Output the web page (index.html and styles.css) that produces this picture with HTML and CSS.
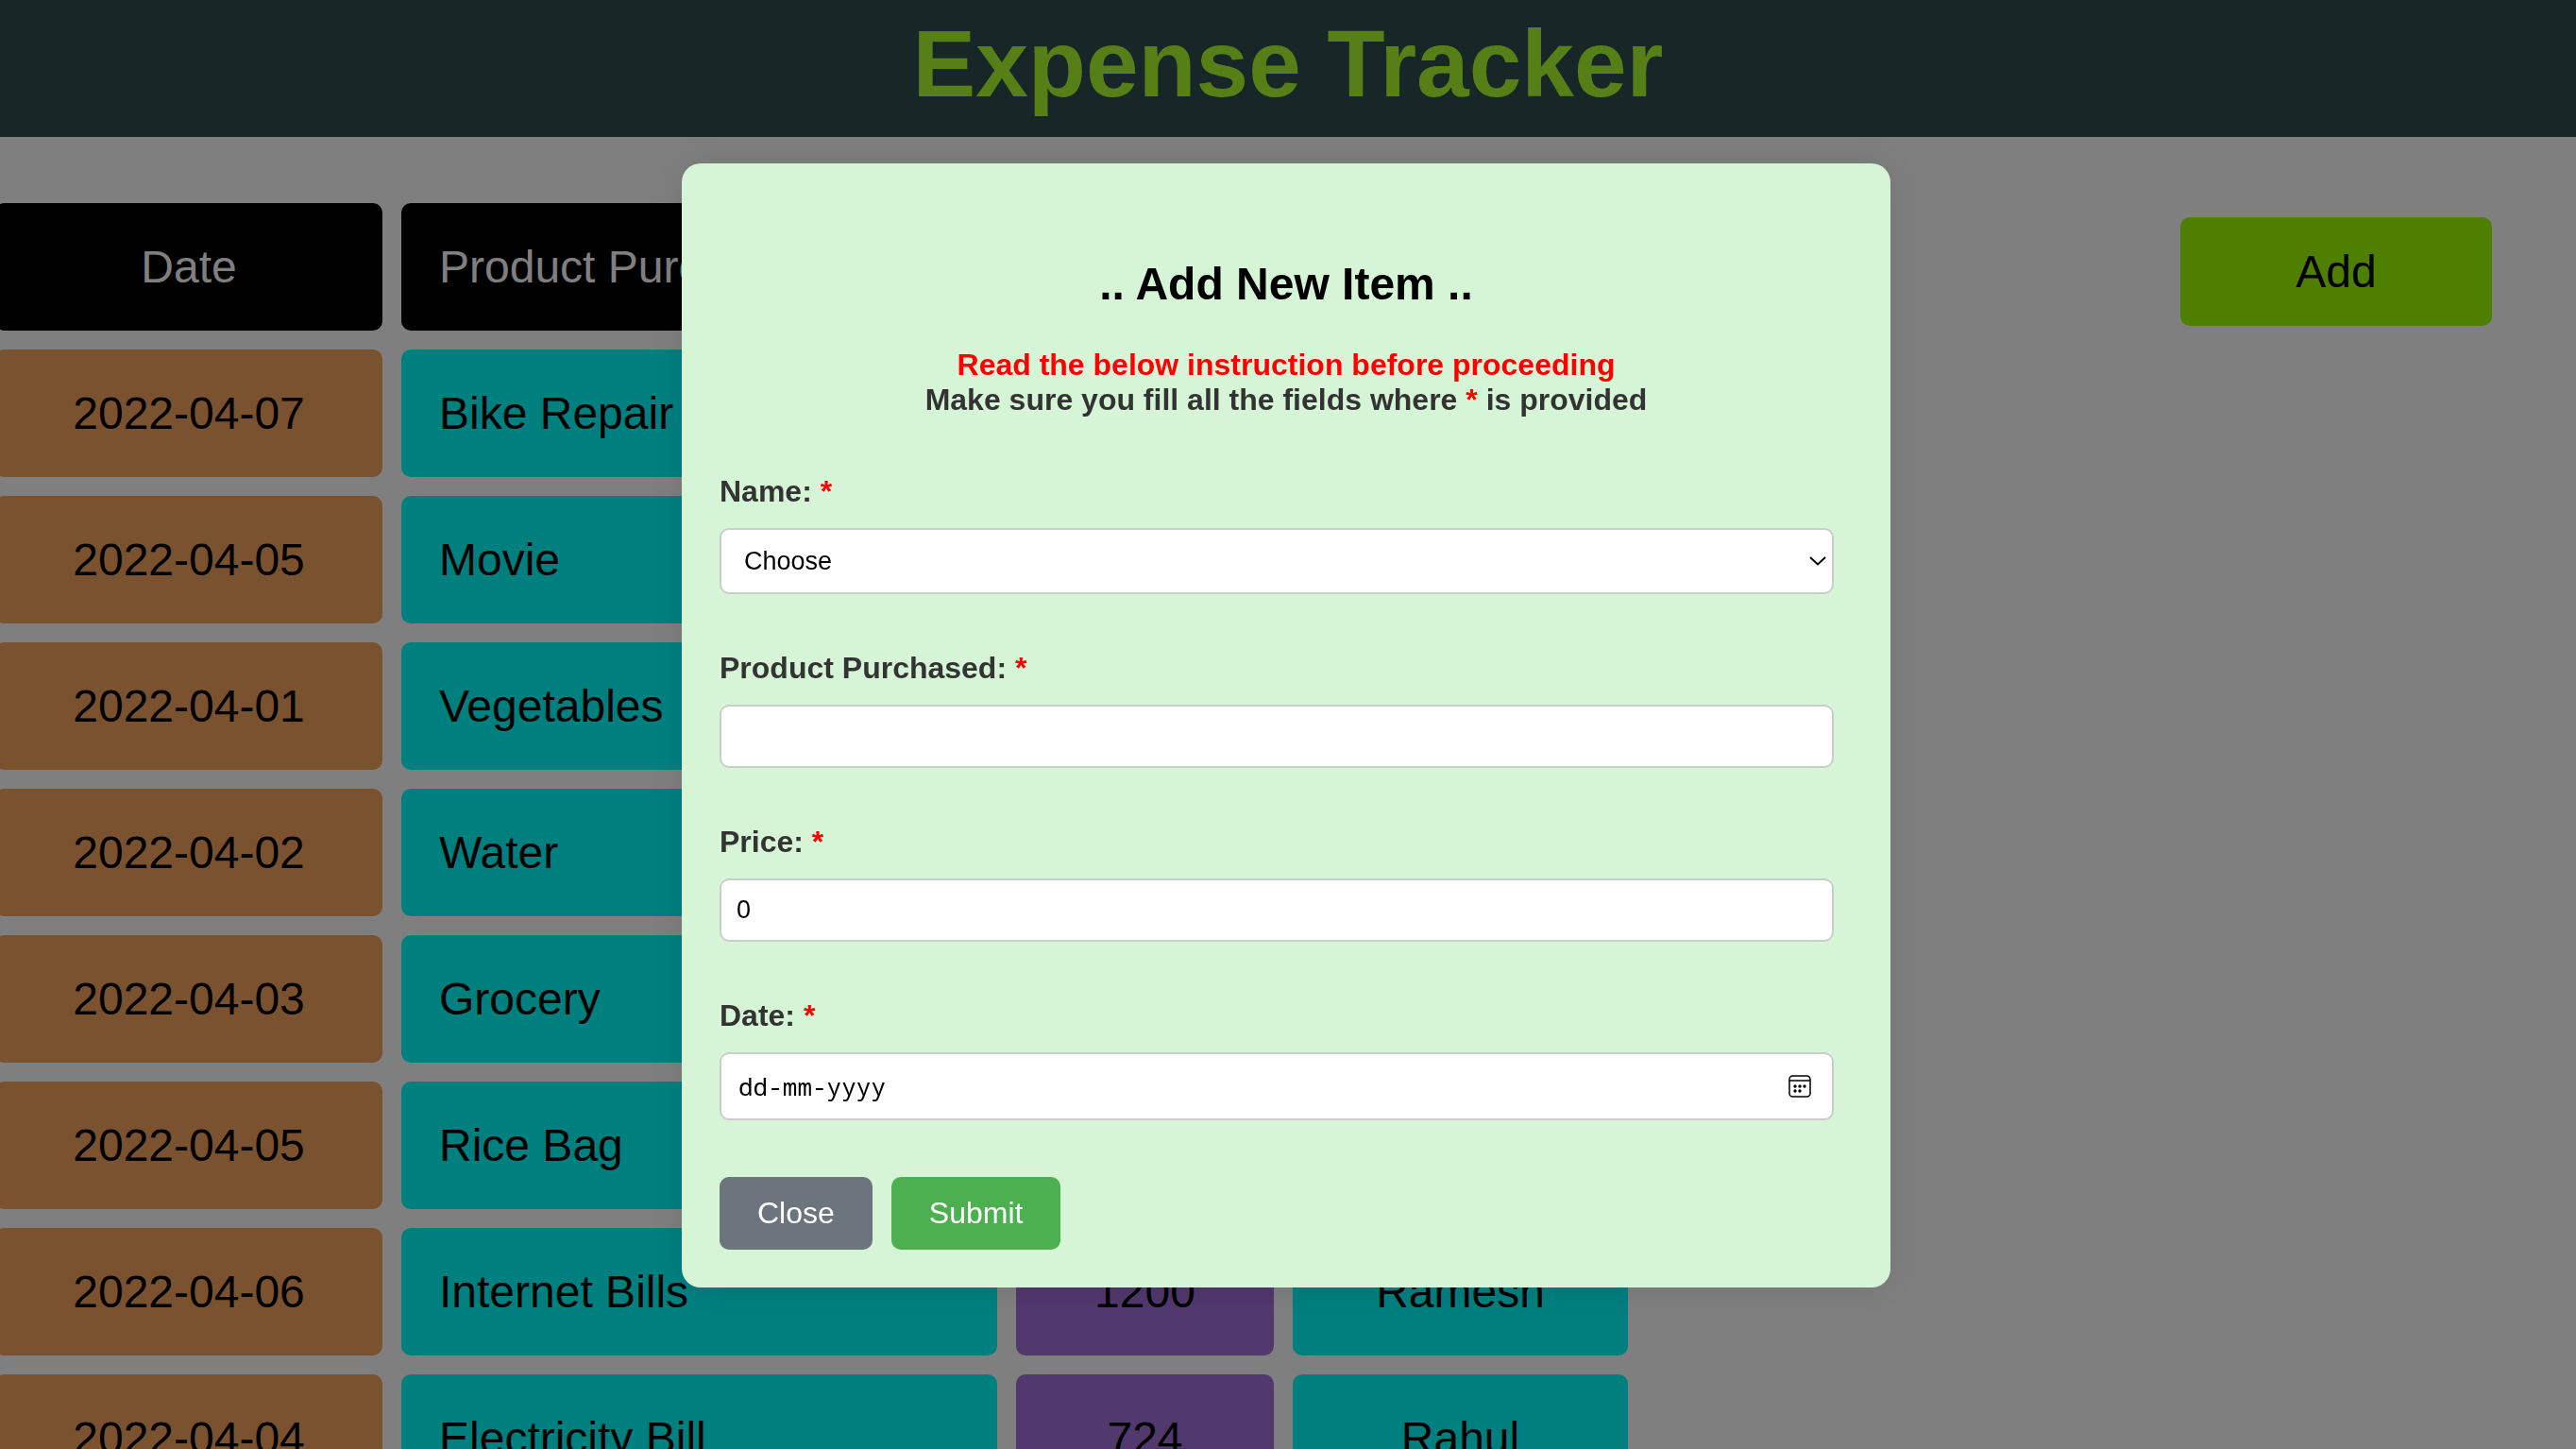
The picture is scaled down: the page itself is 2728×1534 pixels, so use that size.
FILE: index.html
```html
<!DOCTYPE html>
<html lang="en">
<head>
<meta charset="utf-8">
<title>Expense Tracker</title>
<link rel="stylesheet" href="styles.css">
</head>
<body>
<header class="header"><h1>Expense Tracker</h1></header>
<main class="content">
  <table class="expenses">
    <thead>
      <tr><th>Date</th><th class="product">Product Purchased</th><th>Price</th><th>Name</th></tr>
    </thead>
    <tbody>
      <tr><td class="date">2022-04-07</td><td class="product">Bike Repair</td><td class="price">600</td><td class="name">Rahul</td></tr>
      <tr><td class="date">2022-04-05</td><td class="product">Movie</td><td class="price">400</td><td class="name">Ramesh</td></tr>
      <tr><td class="date">2022-04-01</td><td class="product">Vegetables</td><td class="price">250</td><td class="name">Rahul</td></tr>
      <tr><td class="date">2022-04-02</td><td class="product">Water</td><td class="price">70</td><td class="name">Ramesh</td></tr>
      <tr><td class="date">2022-04-03</td><td class="product">Grocery</td><td class="price">900</td><td class="name">Rahul</td></tr>
      <tr><td class="date">2022-04-05</td><td class="product">Rice Bag</td><td class="price">1300</td><td class="name">Ramesh</td></tr>
      <tr><td class="date">2022-04-06</td><td class="product">Internet Bills</td><td class="price">1200</td><td class="name">Ramesh</td></tr>
      <tr><td class="date">2022-04-04</td><td class="product">Electricity Bill</td><td class="price">724</td><td class="name">Rahul</td></tr>
    </tbody>
  </table>
  <button class="add" type="button">Add</button>
</main>
<div class="overlay">
  <form class="modal" role="dialog" aria-labelledby="modal-title">
    <h2 id="modal-title">.. Add New Item ..</h2>
    <p class="note"><span class="required">Read the below instruction before proceeding</span><br>Make sure you fill all the fields where <span class="required">*</span> is provided</p>
    <div class="field">
      <label for="name">Name: <span class="required">*</span></label>
      <div class="control">
        <select class="input select" id="name"><option>Choose</option></select>
        <svg class="chevron" viewBox="0 0 18 10" aria-hidden="true"><path d="M1 1l8 7.500 8-7.500"/></svg>
      </div>
    </div>
    <div class="field">
      <label for="product">Product Purchased: <span class="required">*</span></label>
      <input class="input" id="product" type="text">
    </div>
    <div class="field">
      <label for="price">Price: <span class="required">*</span></label>
      <input class="input" id="price" type="text" inputmode="numeric" value="0">
    </div>
    <div class="field">
      <label for="date">Date: <span class="required">*</span></label>
      <div class="control">
        <input class="input date-input" id="date" type="text" placeholder="dd-mm-yyyy">
        <button class="picker" type="button" aria-label="Show date picker">
          <svg viewBox="0 0 24 24" aria-hidden="true"><rect x="1" y="1" width="22" height="22" rx="3.500"/><path d="M1 6h22"/><g class="dots"><circle cx="7" cy="12" r="1.700"/><circle cx="12" cy="12" r="1.700"/><circle cx="17" cy="12" r="1.700"/><circle cx="7" cy="17" r="1.700"/><circle cx="12" cy="17" r="1.700"/></g></svg>
        </button>
      </div>
    </div>
    <div class="actions">
      <button class="close" type="button">Close</button>
      <button class="submit" type="submit">Submit</button>
    </div>
  </form>
</div>
</body>
</html>
```
FILE: styles.css
```css
* { box-sizing: border-box; }
html, body { height: 100%; }
body {
  margin: 0;
  overflow: hidden;
  background: #fff;
  color: #000;
  font-family: "Liberation Sans", Arial, sans-serif;
  font-size: 48px;
}
h1, h2, p { margin: 0; }
button, input, select { font-family: inherit; color: inherit; }
button { border: 0; border-radius: 10px; }

.header { padding: 10px 0 20px; background: #2f4f4f; text-align: center; }
.header h1 { color: #adff2f; font-size: 100px; }

.content {
  display: flex;
  justify-content: space-between;
  align-items: flex-start;
  padding: 50px 89px 0 0;
}
.expenses { margin-left: -25px; border-spacing: 20px; }
.expenses th, .expenses td {
  padding: 40px;
  border-radius: 10px;
  text-align: center;
  font-weight: normal;
}
.expenses th { min-width: 273px; background: #000; color: #fff; }
.expenses th:first-child { min-width: 410px; }
.expenses th:last-child { min-width: 355px; }
.expenses .product { min-width: 631px; text-align: left; }
.date { background: #f4a460; }
td.product, .name { background: #00ffff; }
.price { background: #a370db; }
.add {
  min-width: 330px;
  margin-top: 35px;
  padding: 30px;
  background: #9fff00;
  font-size: 48px;
}

.overlay {
  position: fixed;
  inset: 0;
  display: flex;
  justify-content: center;
  align-items: center;
  padding: 2px 4px 0 0;
  background: rgba(0, 0, 0, .5);
}
.modal {
  display: flex;
  flex-direction: column;
  gap: 60px;
  width: 1280px;
  max-width: 100%;
  padding: 100px 40px 40px;
  border-radius: 20px;
  background: #d6f5d6;
  box-shadow: 0 0 40px rgba(0, 0, 0, .1);
  font-size: 32px;
}
.modal h2 { margin-bottom: -20px; font-size: 48px; text-align: center; }
.note, .field label { color: #333; font-weight: bold; }
.note { text-align: center; }
.note .required, label .required { color: #f00; }
.field { display: flex; flex-direction: column; gap: 20px; padding-right: 20px; }
.field label { align-self: flex-start; }
.control { position: relative; display: flex; }
.input {
  width: 100%;
  height: 67px;
  padding: 0 16px;
  border: 2px solid #ccc;
  border-radius: 10px;
  background: #fff;
  color: #000;
  font-size: 27px;
}
.select { height: 70px; padding: 0 24px; appearance: none; }
.date-input { height: 72px; padding: 0 18px; font-family: "Noto Sans Mono", "Liberation Mono", monospace; font-size: 26px; }
.date-input::placeholder { color: #000; opacity: 1; }
.chevron {
  position: absolute;
  right: 8px;
  top: 30px;
  width: 18px;
  height: 10px;
  fill: none;
  stroke: #000;
  stroke-width: 2;
  pointer-events: none;
}
.picker { position: absolute; right: 24px; top: 24px; padding: 0; background: none; color: #000; }
.picker svg { display: block; width: 24px; height: 24px; fill: none; stroke: #000; stroke-width: 1.5; }
.picker .dots { fill: #000; stroke: none; }
.actions { display: flex; gap: 20px; }
.actions button { padding: 20px 40px; color: #fff; font-size: 32px; }
.close { background: #6c757d; }
.submit { background: #4caf50; }
```
